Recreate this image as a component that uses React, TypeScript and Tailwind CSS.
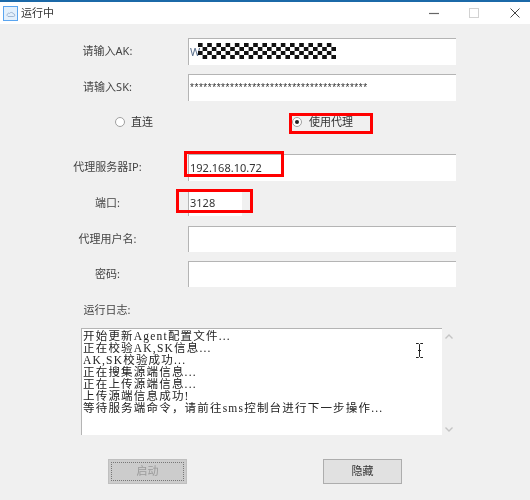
import type { ReactNode } from 'react'

const uiFont = "font-['Noto_Sans','Noto_Sans_CJK_SC',sans-serif]"

const logLines = [
  '开始更新Agent配置文件...',
  '正在校验AK,SK信息...',
  'AK,SK校验成功...',
  '正在搜集源端信息...',
  '正在上传源端信息...',
  '上传源端信息成功!',
  '等待服务端命令，请前往sms控制台进行下一步操作...',
]

function FieldRow({ label, className, children }: { label: string; className: string; children: ReactNode }) {
  return (
    <div className={`flex items-center ${className}`}>
      <div className="w-[188px] pl-[60px] pr-[33px] text-center whitespace-nowrap text-[11px] text-[#444]">{label}</div>
      {children}
    </div>
  )
}

function TextBox({ className = 'w-[268px]', children }: { className?: string; children?: ReactNode }) {
  return (
    <div className={`relative h-full flex items-center pl-[1px] bg-white border-t border-l border-[#b4b4b4] text-[11px] text-[#333] ${className}`}>
      {children}
    </div>
  )
}

export default function App() {
  return (
    <div className={`w-[530px] h-[500px] overflow-hidden bg-[#f0f0f0] blur-[0.5px] ${uiFont}`}>
      {/* Title bar */}
      <div className="h-[24px] bg-white border-t-2 border-[#1b69a8] flex items-center">
        <svg width="15" height="15" viewBox="0 0 15 15" className="ml-[3px]">
          <rect x="0.5" y="0.5" width="14" height="14" fill="#e3f0fc" stroke="#5aa5f0" />
          <path d="M5 10.5h5.5a1.3 1.3 0 0 0 0-2.6A2.2 2.2 0 0 0 6.6 7.4 1.6 1.6 0 0 0 5 10.5Z" fill="none" stroke="#8fa8c8" strokeWidth="0.8" />
        </svg>
        <span className="ml-[3px] text-[11px] text-[#333]">运行中</span>
        <div className="ml-auto flex items-center">
          <svg width="10" height="10" viewBox="0 0 10 10" className="mr-[30px]">
            <path d="M0 5.5h10" stroke="#666" strokeWidth="1.2" />
          </svg>
          <svg width="10" height="10" viewBox="0 0 10 10" className="mr-[31px]">
            <rect x="0.5" y="0.5" width="9" height="9" fill="none" stroke="#d2d2d2" />
          </svg>
          <svg width="10" height="10" viewBox="0 0 10 10" className="mr-[10px]">
            <path d="M0.5 0.5l9 9M9.5 0.5l-9 9" stroke="#444" strokeWidth="1" />
          </svg>
        </div>
      </div>

      <div className="pt-[14px]">
        <FieldRow label="请输入AK:" className="h-[27px]">
          <TextBox>
            <span className="text-[#5a6f8c]">W</span>
            {/* redacted part of the key */}
            <svg width="138" height="16" className="absolute left-[9px] top-[4px]">
              <defs>
                <pattern id="checker" width="9.2" height="8" patternUnits="userSpaceOnUse">
                  <rect x="0" y="0" width="4.6" height="4" fill="#111" />
                  <rect x="4.6" y="4" width="4.6" height="4" fill="#111" />
                </pattern>
              </defs>
              <rect width="138" height="16" fill="url(#checker)" />
            </svg>
          </TextBox>
        </FieldRow>

        <FieldRow label="请输入SK:" className="h-[27px] mt-[9px]">
          <TextBox>
            <span className="-mt-[2px] font-['Liberation_Sans',sans-serif] text-[10px] tracking-[0.55px] text-[#333]">
              ****************************************
            </span>
          </TextBox>
        </FieldRow>

        {/* Connection mode */}
        <div className="h-[20px] mt-[11px] flex items-center text-[11px] text-[#333]">
          <div className="ml-[115px] flex items-center w-[177px]">
            <span className="w-[10px] h-[10px] rounded-full bg-white border border-[#a0a0a0]" />
            <span className="ml-[6px]">直连</span>
          </div>
          <div className="relative flex items-center">
            <span className="w-[10px] h-[10px] rounded-full bg-white border border-[#a0a0a0] flex items-center justify-center">
              <span className="w-[4px] h-[4px] rounded-full bg-[#222]" />
            </span>
            <span className="ml-[7px]">使用代理</span>
            <div className="absolute -left-[3px] -top-[1px] w-[84px] h-[21px] border-[3px] border-[#f00]" />
          </div>
        </div>

        <FieldRow label="代理服务器IP:" className="h-[27px] mt-[22px]">
          <TextBox>
            192.168.10.72
            <div className="absolute -left-[5px] -top-[4px] w-[100px] h-[26px] border-[3px] border-[#f00]" />
          </TextBox>
        </FieldRow>

        <FieldRow label="端口:" className="h-[26px] mt-[9px]">
          <TextBox className="w-[54px]">
            3128
            <div className="absolute -left-[13px] -top-[2px] w-[77px] h-[24px] border-[3px] border-[#f00]" />
          </TextBox>
        </FieldRow>

        <FieldRow label="代理用户名:" className="h-[26px] mt-[10px]">
          <TextBox />
        </FieldRow>

        <FieldRow label="密码:" className="h-[26px] mt-[9px]">
          <TextBox />
        </FieldRow>

        <div className="mt-[15px] h-[16px] leading-[16px] w-[154px] pl-[60px] text-center text-[11px] text-[#444]">运行日志:</div>

        {/* Log output */}
        <div className="mt-[10px] ml-[81px] flex">
          <div className="relative w-[361px] h-[107px] bg-white border-t border-l border-[#b4b4b4] pl-[1px] pt-[1px] font-['Liberation_Serif','Noto_Sans_CJK_SC',serif] text-[11.5px] tracking-[1.2px] leading-[12px] text-[#222]">
            {logLines.map((line) => (
              <div key={line} className="whitespace-nowrap">{line}</div>
            ))}
            <svg width="9" height="15" viewBox="0 0 9 15" className="absolute left-[333px] top-[14px]">
              <path d="M1 0.5h2.5L4.5 1.5 5.5 0.5H8M4.5 1.5v12M1 14.5h2.5l1-1 1 1H8M3 7.5h3" fill="none" stroke="#222" strokeWidth="1" />
            </svg>
          </div>
          <div className="w-[14px] h-[107px] flex flex-col justify-between items-center pt-[6px] pb-[3px]">
            <svg width="8" height="5" viewBox="0 0 8 5"><path d="M0.5 4.5L4 1l3.5 3.5" fill="none" stroke="#c4c4c4" strokeWidth="1.4" /></svg>
            <svg width="8" height="5" viewBox="0 0 8 5"><path d="M0.5 0.5L4 4l3.5-3.5" fill="none" stroke="#c4c4c4" strokeWidth="1.4" /></svg>
          </div>
        </div>

        <div className="mt-[24px] ml-[108px] flex gap-[136px]">
          <div className="w-[79px] h-[25px] p-[2px] bg-[#cccccc] border border-[#bfbfbf]">
            <div className="h-full flex items-center justify-center border border-dotted border-[#777] text-[11px] text-[#9a9a9a]">启动</div>
          </div>
          <div className="w-[79px] h-[25px] flex items-center justify-center bg-[#e1e1e1] border border-[#adadad] text-[11px] text-[#333]">隐藏</div>
        </div>
      </div>
    </div>
  )
}
